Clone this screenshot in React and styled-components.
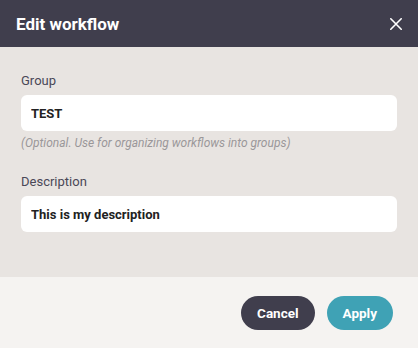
import styled, { createGlobalStyle } from "styled-components";

const GlobalStyle = createGlobalStyle`
  html, body {
    margin: 0;
    padding: 0;
    font-family: Roboto, "Liberation Sans", sans-serif;
  }
`;

function App() {
  return (
    <>
      <GlobalStyle />
      <Dialog>
        <Header>
          <Title>Edit workflow</Title>
          <CloseButton aria-label="Close">
            <svg width="12" height="12" viewBox="0 0 12 12">
              <path d="M0.8 0.8L11.2 11.2M11.2 0.8L0.8 11.2" stroke="#fff" strokeWidth="1.6" strokeLinecap="round" />
            </svg>
          </CloseButton>
        </Header>
        <Body>
          <Field>
            <Label>Group</Label>
            <Input defaultValue="TEST" />
            <Hint>(Optional. Use for organizing workflows into groups)</Hint>
          </Field>
          <Field>
            <Label>Description</Label>
            <Input defaultValue="This is my description" />
          </Field>
        </Body>
        <Footer>
          <Button $variant="dark">Cancel</Button>
          <Button $variant="primary">Apply</Button>
        </Footer>
      </Dialog>
    </>
  );
}

const Dialog = styled.div`
  width: 418px;
  height: 348px;
  display: flex;
  flex-direction: column;
  background: #e8e4e1;
`;

const Header = styled.div`
  height: 47px;
  box-sizing: border-box;
  padding: 0 16px;
  display: flex;
  align-items: center;
  justify-content: space-between;
  background: #403e4d;
`;

const Title = styled.h2`
  margin: 0;
  font-size: 17px;
  font-weight: 700;
  color: #fff;
`;

const CloseButton = styled.button`
  background: none;
  border: none;
  padding: 0;
  width: 12px;
  height: 12px;
  display: flex;
  align-items: center;
  justify-content: center;
  cursor: pointer;
`;

const Body = styled.div`
  flex: 0 0 230px;
  box-sizing: border-box;
  padding: 26px 21px 0;
  display: flex;
  flex-direction: column;
  gap: 24px;
`;

const Field = styled.div`
  display: flex;
  flex-direction: column;
`;

const Label = styled.label`
  font-size: 13px;
  color: #4a4857;
  line-height: 16px;
  margin-bottom: 6px;
`;

const Input = styled.input`
  height: 36px;
  box-sizing: border-box;
  border: none;
  border-radius: 6px;
  background: #fff;
  padding: 0 10px;
  font-family: inherit;
  font-size: 13px;
  font-weight: 700;
  color: #222;
  outline: none;
`;

const Hint = styled.div`
  margin-top: 5px;
  font-size: 12px;
  font-style: italic;
  color: #9a9799;
  line-height: 14px;
`;

const Footer = styled.div`
  flex: 1;
  background: #f5f3f1;
  display: flex;
  align-items: center;
  justify-content: flex-end;
  gap: 12px;
  padding: 0 25px;
`;

const Button = styled.button`
  height: 34px;
  padding: 0 16px;
  border: none;
  border-radius: 17px;
  font-family: inherit;
  font-size: 13.5px;
  font-weight: 700;
  color: #fff;
  background: ${(p) => (p.$variant === "primary" ? "#3fa2b5" : "#403e4d")};
  cursor: pointer;
`;

export default App;
